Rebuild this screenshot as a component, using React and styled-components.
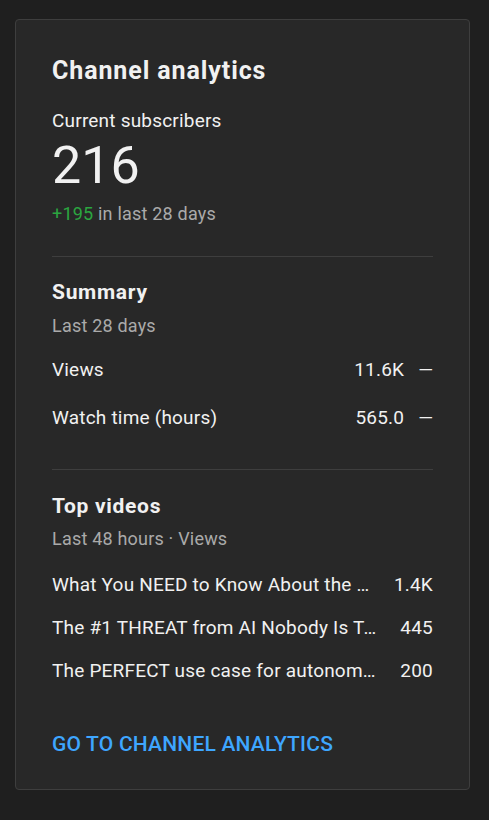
import React from 'react';
import styled, { createGlobalStyle } from 'styled-components';

const GlobalStyle = createGlobalStyle`
    html, body {
        margin: 0;
        background: #1f1f1f;
    }
    body {
        font-family: Roboto, "Noto Sans", Arial, sans-serif;
        color: #f1f1f1;
    }
`

const Page = styled.div`
    padding: 19px 19px 30px 15px;
    min-height: 820px;
    box-sizing: border-box;
`

const Card = styled.section`
    background: #282828;
    border: 1px solid #3e3e3e;
    border-radius: 4px;
    padding: 35px 36px 30px;
    height: 771px;
    box-sizing: border-box;
`

const Title = styled.h2`
    margin: 0;
    font-size: 25px;
    line-height: 32px;
    font-weight: 700;
    letter-spacing: 0.9px;
`

const Label = styled.div`
    margin-top: 22px;
    font-size: 19px;
    line-height: 24px;
    letter-spacing: 0.2px;
`

const BigNumber = styled.div`
    margin-top: 5px;
    font-size: 52px;
    line-height: 56px;
    font-weight: 400;
`

const Secondary = styled.div`
    margin-top: ${p => p.gap || 0}px;
    font-size: 18px;
    line-height: 24px;
    letter-spacing: 0.2px;
    color: #aaaaaa;
`

const Green = styled.span`
    color: #2ba640;
`

const Divider = styled.hr`
    border: 0;
    border-top: 1px solid #3e3e3e;
    margin: ${p => p.top}px 0 0;
`

const SectionTitle = styled.h3`
    margin: ${p => p.top}px 0 0;
    font-size: 21px;
    line-height: 28px;
    font-weight: 700;
    letter-spacing: 0.7px;
`

const Rows = styled.div`
    display: flex;
    flex-direction: column;
    gap: ${p => p.gap}px;
    margin-top: ${p => p.top}px;
`

const Row = styled.div`
    display: flex;
    align-items: center;
    font-size: 19px;
    line-height: 24px;
    letter-spacing: 0.2px;
`

const RowLabel = styled.div`
    flex: 1;
    min-width: 0;
    white-space: nowrap;
    overflow: hidden;
    text-overflow: ellipsis;
    margin-right: ${p => p.gap || 0}px;
`

const Dash = styled.span`
    margin-left: 14px;
    letter-spacing: 0;
`

const Link = styled.a`
    display: block;
    margin-top: 47px;
    font-size: 21px;
    line-height: 28px;
    font-weight: 500;
    letter-spacing: 0.2px;
    color: #3ea6ff;
    text-transform: uppercase;
    text-decoration: none;
`

const summary = [
    { label: 'Views', value: '11.6K' },
    { label: 'Watch time (hours)', value: '565.0' },
];

const topVideos = [
    { title: 'What You NEED to Know About the New AI Agents', views: '1.4K' },
    { title: 'The #1 THREAT from AI Nobody Is Talking About', views: '445' },
    { title: 'The PERFECT use case for autonomous agents', views: '200' },
];

const App = () => {
    return (
        <Page>
            <GlobalStyle />
            <Card>
                <Title>Channel analytics</Title>
                <Label>Current subscribers</Label>
                <BigNumber>216</BigNumber>
                <Secondary gap={8}><Green>+195</Green> in last 28 days</Secondary>

                <Divider top={30} />

                <SectionTitle top={21}>Summary</SectionTitle>
                <Secondary gap={8}>Last 28 days</Secondary>
                <Rows gap={24} top={20}>
                    {summary.map(item => (
                        <Row key={item.label}>
                            <RowLabel>{item.label}</RowLabel>
                            <span>{item.value}</span>
                            <Dash>—</Dash>
                        </Row>
                    ))}
                </Rows>

                <Divider top={39} />

                <SectionTitle top={22}>Top videos</SectionTitle>
                <Secondary gap={7}>Last 48 hours · Views</Secondary>
                <Rows gap={19} top={22}>
                    {topVideos.map(video => (
                        <Row key={video.title}>
                            <RowLabel gap={16}>{video.title}</RowLabel>
                            <span>{video.views}</span>
                        </Row>
                    ))}
                </Rows>

                <Link href="#">Go to channel analytics</Link>
            </Card>
        </Page>
    );
}

export default App;
